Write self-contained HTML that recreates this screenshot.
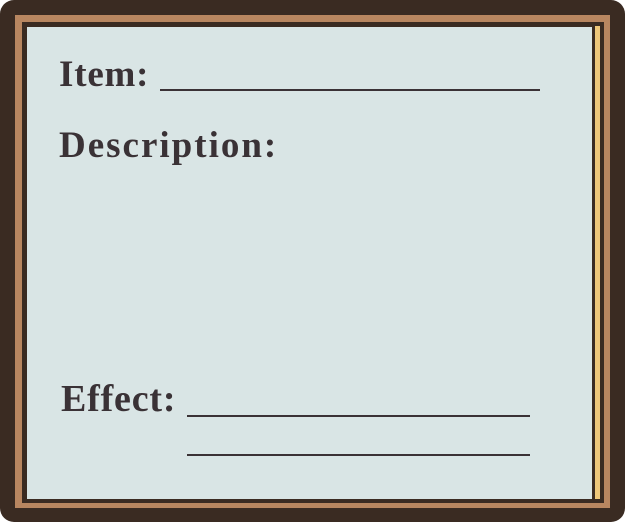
<!DOCTYPE html>
<html><head><style>
body{margin:0;width:625px;height:522px;background:#fff;overflow:hidden;position:relative;font-family:"Liberation Serif",serif}
.o{position:absolute;left:0;top:0;width:625px;height:522px;background:#3a2b22;border-radius:14px}
.t{position:absolute;left:15px;top:15px;right:15px;bottom:14px;background:#b88660}
.d{position:absolute;left:22px;top:22px;right:21px;bottom:19px;background:#3a2b22}
.g{position:absolute;right:25px;top:26px;width:5px;bottom:23px;background:#eec77a}
.p{position:absolute;left:27px;top:27px;width:565px;height:472px;background:#d9e5e5}
.x{position:absolute;color:#3a3236;font-weight:bold;white-space:nowrap}
.l{position:absolute;height:2px;background:#3a3236}
</style></head><body>
<div class="o"></div><div class="t"></div><div class="d"></div><div class="g"></div><div class="p"></div>
<div class="x" style="left:59px;top:53px;font-size:37px;letter-spacing:0.8px">Item:</div>
<div class="l" style="left:160px;top:89px;width:380px"></div>
<div class="x" style="left:59px;top:124px;font-size:37px;letter-spacing:2px">Description:</div>
<div class="x" style="left:61px;top:377px;font-size:38px;letter-spacing:0.8px">Effect:</div>
<div class="l" style="left:187px;top:415px;width:343px"></div>
<div class="l" style="left:187px;top:454px;width:343px"></div>
</body></html>
